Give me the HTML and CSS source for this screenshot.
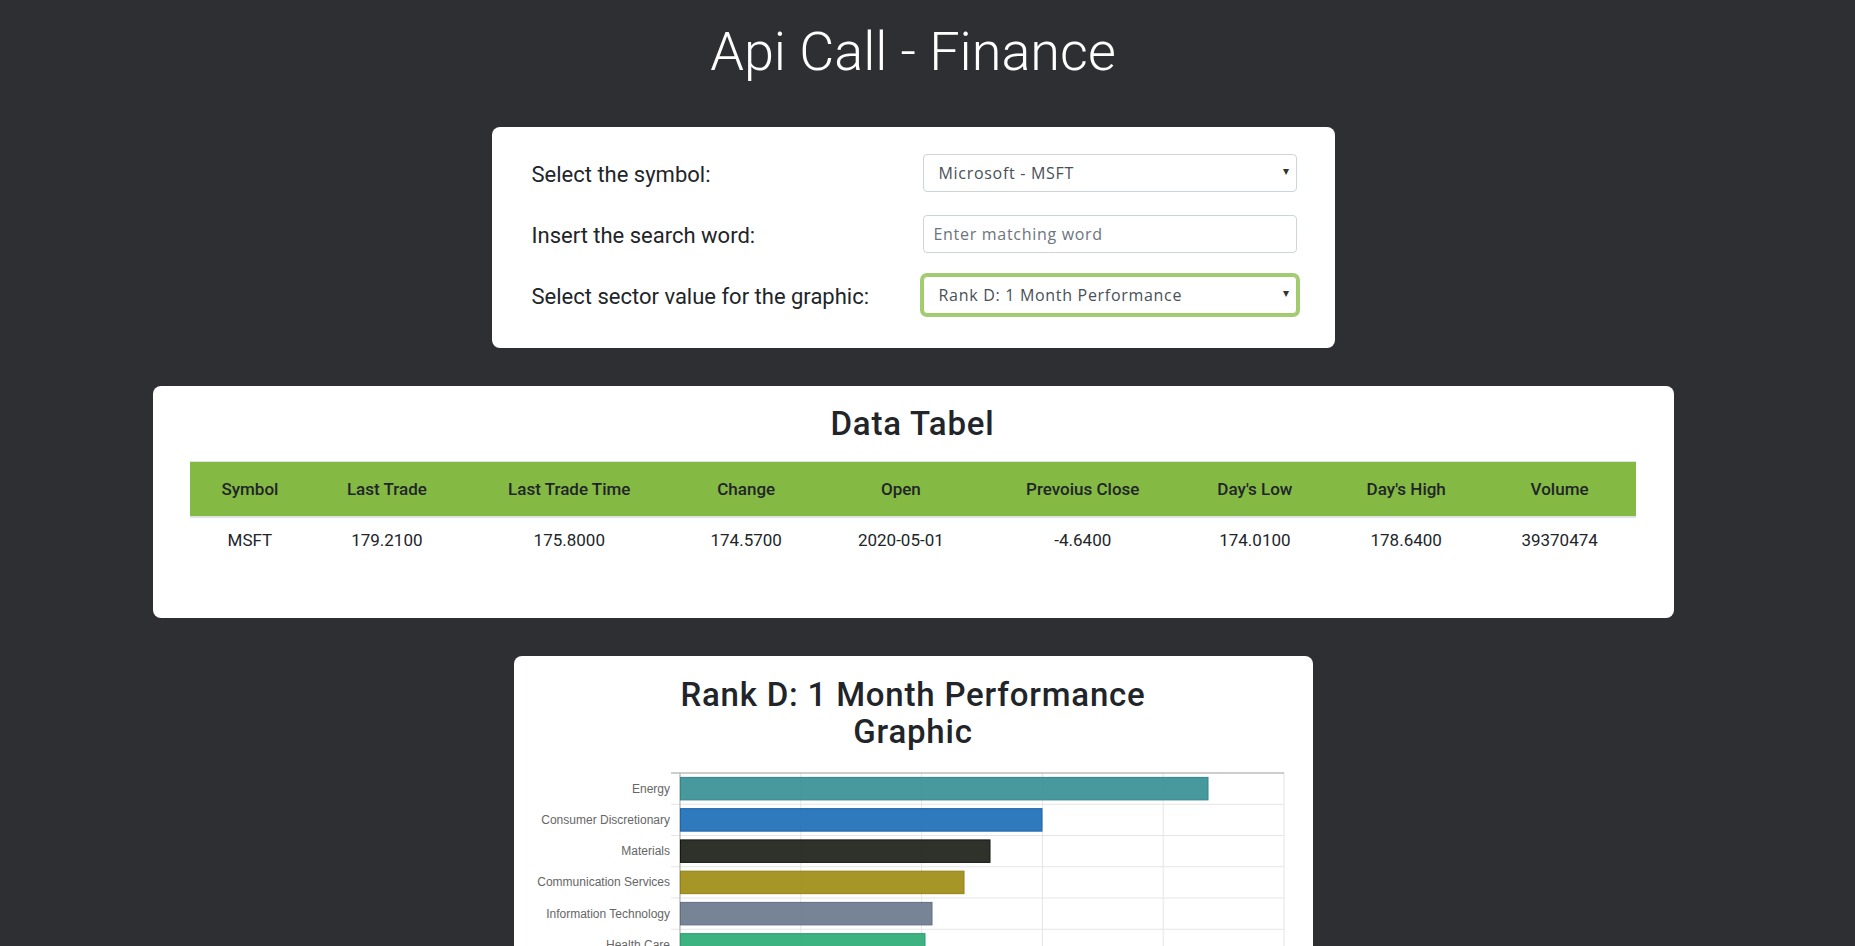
FILE: index.html
```html
<!DOCTYPE html>
<html lang="en">
<head>
    <meta charset="UTF-8">
    <meta name="viewport" content="width=device-width, initial-scale=1.0">
    <title>Api Call - Finance</title>
    <link rel="stylesheet" href="styles.css">
</head>
<body>
    <div class="page">
        <h1 class="title">Api Call - Finance</h1>

        <div class="card card-form">
            <form class="form">
                <label class="form-label" for="symbol">Select the symbol:</label>
                <div class="select-wrap">
                    <select id="symbol" class="control select">
                        <option>Microsoft - MSFT</option>
                        <option>Apple - AAPL</option>
                        <option>Amazon - AMZN</option>
                    </select>
                </div>

                <label class="form-label" for="search">Insert the search word:</label>
                <input type="text" id="search" class="control input" placeholder="Enter matching word">

                <label class="form-label" for="sector">Select sector value for the graphic:</label>
                <div class="select-wrap">
                    <select id="sector" class="control select focused">
                        <option>Rank D: 1 Month Performance</option>
                        <option>Rank A: Real-Time Performance</option>
                        <option>Rank B: 1 Day Performance</option>
                    </select>
                </div>
            </form>
        </div>

        <div class="card card-table">
            <h2 class="card-title">Data Tabel</h2>
            <table class="data">
                <thead>
                    <tr>
                        <th>Symbol</th>
                        <th>Last Trade</th>
                        <th>Last Trade Time</th>
                        <th>Change</th>
                        <th>Open</th>
                        <th>Prevoius Close</th>
                        <th>Day's Low</th>
                        <th>Day's High</th>
                        <th>Volume</th>
                    </tr>
                </thead>
                <tbody>
                    <tr>
                        <td>MSFT</td>
                        <td>179.2100</td>
                        <td>175.8000</td>
                        <td>174.5700</td>
                        <td>2020-05-01</td>
                        <td>-4.6400</td>
                        <td>174.0100</td>
                        <td>178.6400</td>
                        <td>39370474</td>
                    </tr>
                </tbody>
            </table>
        </div>

        <div class="card card-chart">
            <h2 class="card-title chart-title">Rank D: 1 Month Performance Graphic</h2>
            <svg class="chart" width="759" height="380" viewBox="0 0 759 380">
                <!-- grid -->
                <g class="grid">
                    <line x1="266.8" y1="10" x2="266.8" y2="362"/>
                    <line x1="387.6" y1="10" x2="387.6" y2="362"/>
                    <line x1="508.4" y1="10" x2="508.4" y2="362"/>
                    <line x1="629.2" y1="10" x2="629.2" y2="362"/>
                    <line x1="750" y1="10" x2="750" y2="362"/>
                    <line x1="137" y1="41.25" x2="750" y2="41.25"/>
                    <line x1="137" y1="72.5" x2="750" y2="72.5"/>
                    <line x1="137" y1="103.75" x2="750" y2="103.75"/>
                    <line x1="137" y1="135" x2="750" y2="135"/>
                    <line x1="137" y1="166.25" x2="750" y2="166.25"/>
                    <line x1="137" y1="197.5" x2="750" y2="197.5"/>
                    <line x1="137" y1="228.75" x2="750" y2="228.75"/>
                    <line x1="137" y1="260" x2="750" y2="260"/>
                    <line x1="137" y1="291.25" x2="750" y2="291.25"/>
                    <line x1="137" y1="322.5" x2="750" y2="322.5"/>
                    <line x1="137" y1="353.75" x2="750" y2="353.75"/>
                </g>
                <g class="axis">
                    <line x1="137" y1="10" x2="750" y2="10"/>
                    <line x1="146" y1="10" x2="146" y2="362"/>
                </g>

                <!-- bars -->
                <g class="bars">
                    <rect x="146.5" y="14.4" width="527.5" height="22.5" fill="#3c9397" stroke="#2f878b"/>
                    <rect x="146.5" y="45.65" width="361.5" height="22.5" fill="#2271b9" stroke="#1d64ad"/>
                    <rect x="146.5" y="76.9" width="309.5" height="22.5" fill="#22251e" stroke="#151712"/>
                    <rect x="146.5" y="108.15" width="283.5" height="22.5" fill="#a08e1a" stroke="#928111"/>
                    <rect x="146.5" y="139.4" width="251.5" height="22.5" fill="#6e7c8e" stroke="#606e80"/>
                    <rect x="146.5" y="170.65" width="244.5" height="22.5" fill="#33ad7a" stroke="#27a06e"/>
                    <rect x="146.5" y="201.9" width="205.5" height="22.5" fill="#c0504d" stroke="#b04542"/>
                    <rect x="146.5" y="233.15" width="171.5" height="22.5" fill="#8064a2" stroke="#735896"/>
                    <rect x="146.5" y="264.4" width="143.5" height="22.5" fill="#f79646" stroke="#e88a3c"/>
                    <rect x="146.5" y="295.65" width="104.5" height="22.5" fill="#4bacc6" stroke="#3f9fb9"/>
                    <rect x="146.5" y="326.9" width="67.5" height="22.5" fill="#9bbb59" stroke="#8fae4e"/>
                </g>

                <!-- labels -->
                <g class="labels">
                    <text x="136" y="29.5">Energy</text>
                    <text x="136" y="60.75">Consumer Discretionary</text>
                    <text x="136" y="92">Materials</text>
                    <text x="136" y="123.25">Communication Services</text>
                    <text x="136" y="154.5">Information Technology</text>
                    <text x="136" y="185.75">Health Care</text>
                    <text x="136" y="217">Industrials</text>
                    <text x="136" y="248.25">Financials</text>
                    <text x="136" y="279.5">Real Estate</text>
                    <text x="136" y="310.75">Consumer Staples</text>
                    <text x="136" y="342">Utilities</text>
                </g>
                <g class="ticks">
                    <text x="146" y="376">0</text>
                    <text x="266.8" y="376">2</text>
                    <text x="387.6" y="376">4</text>
                    <text x="508.4" y="376">6</text>
                    <text x="629.2" y="376">8</text>
                    <text x="750" y="376">10</text>
                </g>
            </svg>
        </div>
    </div>
</body>
</html>
```

FILE: styles.css
```css
body {
    margin: 0;
    background-color: #2e2f33;
    font-family: "Roboto", "Liberation Sans", sans-serif;
    color: #212529;
}
.page {
    padding: 0 29px 40px 0;
    display: flex;
    flex-direction: column;
    align-items: center;
}
.title {
    margin: 20px 0 42px;
    font-size: 54px;
    font-weight: 300;
    line-height: 1.2;
    color: #ffffff;
}
.card {
    background-color: #ffffff;
    border-radius: 8px;
    box-sizing: border-box;
}
.card-title {
    margin: 0 0 18px;
    font-size: 33px;
    font-weight: 500;
    letter-spacing: 0.8px;
    line-height: 38.4px;
    text-align: center;
    color: #212529;
}

/* form card */
.card-form {
    width: 843px;
    padding: 27px 38px 34px 40px;
}
.form {
    display: grid;
    grid-template-columns: 1fr 374px;
    row-gap: 23px;
}
.form-label {
    font-size: 22px;
    line-height: 38px;
    padding-top: 2px;
    height: 38px;
    box-sizing: border-box;
}
.control {
    width: 100%;
    height: 38px;
    box-sizing: border-box;
    border: 1px solid #ced4da;
    border-radius: 4px;
    background-color: #ffffff;
    font-family: "Open Sans", sans-serif;
    font-size: 16px;
    letter-spacing: 0.7px;
    color: #495057;
    outline: none;
}
.input {
    padding: 0 10px;
}
.input::placeholder {
    color: #6c757d;
}
.select-wrap {
    position: relative;
}
.select {
    appearance: none;
    -webkit-appearance: none;
    padding: 0 30px 0 15px;
}
.select-wrap::after {
    content: "\25BE";
    position: absolute;
    right: 8px;
    top: 10px;
    font-size: 12px;
    color: #333333;
    pointer-events: none;
}
.focused {
    border-color: #9bcd63;
    box-shadow: 0 0 0 3px rgba(132, 185, 68, 0.75);
}

/* table card */
.card-table {
    width: 1521px;
    margin-top: 38px;
    padding: 19px 38px 56px 37px;
}
.data {
    width: 100%;
    border-collapse: collapse;
    text-align: center;
    font-size: 17px;
    line-height: 20px;
}
.data th {
    background-color: #84b944;
    font-weight: 500;
    padding: 17px 4px;
    border-top: 1px solid #dee2e6;
    border-bottom: 2px solid #dee2e6;
}
.data td {
    padding: 12px 4px;
    font-weight: 400;
}
.data th:nth-child(1) { width: 118px; }
.data th:nth-child(2) { width: 152px; }
.data th:nth-child(3) { width: 216px; }
.data th:nth-child(4) { width: 140px; }
.data th:nth-child(5) { width: 170px; }
.data th:nth-child(6) { width: 200px; }
.data th:nth-child(7) { width: 146px; }
.data th:nth-child(8) { width: 154px; }
.data th:nth-child(9) { width: 150px; }

/* chart card */
.card-chart {
    width: 799px;
    margin-top: 38px;
    padding: 20px 20px 20px;
}
.chart-title {
    max-width: 560px;
    margin: 0 auto 13px;
    line-height: 37px;
}
.chart {
    display: block;
}
.grid line {
    stroke: #e5e5e5;
    stroke-width: 1;
}
.axis line {
    stroke: #bdbdbd;
    stroke-width: 1.5;
}
.bars rect {
    fill-opacity: 0.94;
    stroke-width: 1;
}
.labels text,
.ticks text {
    font-family: "Liberation Sans", Arial, sans-serif;
    font-size: 12px;
    fill: #666666;
}
.labels text {
    text-anchor: end;
}
.ticks text {
    text-anchor: middle;
}
```
